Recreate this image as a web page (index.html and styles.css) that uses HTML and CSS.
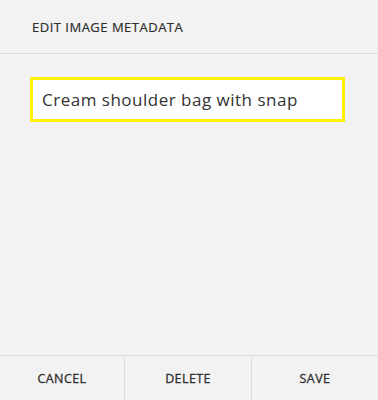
FILE: index.html
```html
<!DOCTYPE html>
<html>
<head>
<meta charset="utf-8">
<link rel="stylesheet" href="styles.css">
</head>
<body>
<div class="dialog">
  <div class="header">EDIT IMAGE METADATA</div>
  <div class="body">
    <div class="field">Cream shoulder bag with snap</div>
  </div>
  <div class="footer">
    <div class="btn">CANCEL</div>
    <div class="btn">DELETE</div>
    <div class="btn">SAVE</div>
  </div>
</div>
</body>
</html>
```
FILE: styles.css
```css
html, body {
  margin: 0;
  padding: 0;
  background: #f2f2f2;
}
.dialog {
  width: 378px;
  height: 400px;
  display: flex;
  flex-direction: column;
  background: #f2f2f2;
  font-family: "Open Sans", "Lato", sans-serif;
  color: #333;
}
.header {
  height: 54px;
  box-sizing: border-box;
  border-bottom: 1px solid #dcdcdc;
  padding: 18px 0 0 32px;
  font-size: 13px;
  letter-spacing: 0.5px;
  color: #2e2e2e;
  -webkit-text-stroke: 0.2px #2e2e2e;
}
.body {
  flex: 1;
  padding: 23px 33px 0 30px;
}
.field {
  height: 45px;
  box-sizing: border-box;
  border: 3px solid #fff200;
  background: #fff;
  padding: 0 0 1px 9px;
  display: flex;
  align-items: center;
  font-size: 17px;
  letter-spacing: 0.5px;
  color: #333;
}
.footer {
  height: 44px;
  border-top: 1px solid #dcdcdc;
  display: grid;
  grid-template-columns: 124px 127px 1fr;
}
.btn {
  display: flex;
  align-items: center;
  justify-content: center;
  font-size: 12.5px;
  letter-spacing: 0.4px;
  color: #2e2e2e;
  -webkit-text-stroke: 0.3px #2e2e2e;
}
.btn + .btn {
  border-left: 1px solid #dcdcdc;
}
```
